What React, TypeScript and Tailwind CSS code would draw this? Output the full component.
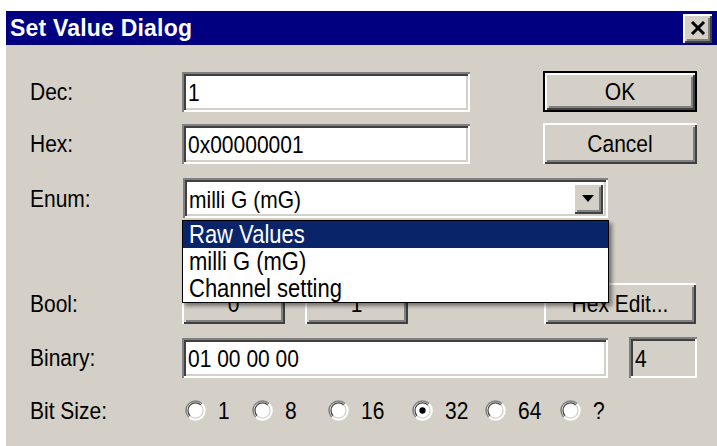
import React, { useState } from "react";

const sunken =
  "shadow-[inset_2px_2px_0_#808080,inset_-2px_-2px_0_#ffffff,inset_4px_4px_0_#404040,inset_-4px_-4px_0_#d4d0c8]";
const raised =
  "shadow-[inset_2px_2px_0_#ffffff,inset_-2px_-2px_0_#404040,inset_4px_4px_0_#d4d0c8,inset_-4px_-4px_0_#808080]";

// the dialog font is drawn a bit taller than it is wide
const tall = "inline-block scale-y-[1.18]";

const Field = ({ value, width }: { value: string; width: string }) => (
  <div className={`${width} h-[40px] bg-white ${sunken} flex items-center pl-[6px] pt-[2px]`}>
    <span className={tall}>{value}</span>
  </div>
);

const Button = ({ label, width, isDefault }: { label: string; width: string; isDefault?: boolean }) => (
  <button
    type="button"
    className={`${width} h-[41px] bg-[#d4d0c8] flex items-center justify-center ${
      isDefault ? "border-2 border-black" : ""
    } ${raised}`}
  >
    <span className={tall}>{label}</span>
  </button>
);

const Radio = ({ checked }: { checked?: boolean }) => (
  <svg width="21" height="21" viewBox="0 0 20 20">
    <circle cx="10" cy="10" r="9" fill="#ffffff" />
    <path d="M3.6 16.4 A9 9 0 0 1 16.4 3.6" fill="none" stroke="#808080" strokeWidth="1.4" />
    <path d="M4.9 15.1 A7.2 7.2 0 0 1 15.1 4.9" fill="none" stroke="#404040" strokeWidth="1.2" />
    <path d="M16.4 3.6 A9 9 0 0 1 3.6 16.4" fill="none" stroke="#ffffff" strokeWidth="1.4" />
    <path d="M15.1 4.9 A7.2 7.2 0 0 1 4.9 15.1" fill="none" stroke="#d4d0c8" strokeWidth="1.2" />
    {checked && <circle cx="10" cy="10" r="3" fill="#000000" />}
  </svg>
);

const bitSizes = [
  { label: "1", width: "w-[67px]" },
  { label: "8", width: "w-[76px]" },
  { label: "16", width: "w-[84px]" },
  { label: "32", width: "w-[73px]" },
  { label: "64", width: "w-[75px]" },
  { label: "?", width: "w-[60px]" },
];

const enumOptions = ["Raw Values", "milli G (mG)", "Channel setting"];

const App = () => {
  const [bitSize] = useState("32");

  return (
    <div className="min-h-screen bg-white pt-[11px] pl-[6px] font-['Liberation_Sans',Arial,sans-serif] text-[21px] text-black leading-none">
      <div className="w-[711px] h-[435px] bg-[#d4d0c8] flex flex-col">
        {/* title bar */}
        <div className="h-[34px] bg-[#000080] flex items-center justify-between pl-[4px] pr-[5px]">
          <span className="text-white font-bold text-[23px] tracking-[0.2px]">Set Value Dialog</span>
          <div className={`w-[29px] h-[29px] bg-[#d4d0c8] flex items-center justify-center ${raised}`}>
            <svg width="16" height="14" viewBox="0 0 16 14">
              <path d="M2 1 L14 13 M14 1 L2 13" stroke="#000" strokeWidth="3" />
            </svg>
          </div>
        </div>

        <div className="flex flex-col pt-[26px] pl-[24px]">
          <div className="flex items-center h-[41px]">
            <span className={`w-[152px] ${tall}`}>Dec:</span>
            <Field value="1" width="w-[288px]" />
            <div className="ml-[73px]">
              <Button label="OK" width="w-[154px]" isDefault />
            </div>
          </div>

          <div className="flex items-center h-[41px] mt-[11px]">
            <span className={`w-[152px] ${tall}`}>Hex:</span>
            <Field value="0x00000001" width="w-[288px]" />
            <div className="ml-[73px]">
              <Button label="Cancel" width="w-[154px]" />
            </div>
          </div>

          <div className="flex items-center h-[40px] mt-[14px]">
            <span className={`w-[153px] ${tall}`}>Enum:</span>
            <div className={`relative w-[425px] h-[40px] bg-white ${sunken} flex items-center pl-[6px] pt-[2px]`}>
              <span className={tall}>milli G (mG)</span>
              <div
                className={`absolute right-[5px] top-[5px] w-[30px] h-[31px] bg-[#d4d0c8] flex items-center justify-center ${raised}`}
              >
                <svg width="12" height="7" viewBox="0 0 12 7">
                  <path d="M0 0 H12 L6 7 Z" fill="#000" />
                </svg>
              </div>
              {/* open list */}
              <div className="absolute left-[-1px] top-[42px] w-[427px] z-10 bg-white border border-black shadow-[3px_3px_4px_rgba(0,0,0,0.45)] text-[22px]">
                {enumOptions.map((opt, i) => (
                  <div
                    key={opt}
                    className={`h-[27px] flex items-center pl-[6px] ${i === 0 ? "bg-[#0a246a] text-white" : ""}`}
                  >
                    <span className={tall}>{opt}</span>
                  </div>
                ))}
              </div>
            </div>
          </div>

          <div className="flex items-center h-[41px] mt-[65px]">
            <span className={`w-[152px] ${tall}`}>Bool:</span>
            <Button label="0" width="w-[103px]" />
            <div className="ml-[20px]">
              <Button label="1" width="w-[103px]" />
            </div>
            <div className="ml-[136px]">
              <Button label="Hex Edit..." width="w-[152px]" />
            </div>
          </div>

          <div className="flex items-center h-[41px] mt-[13px]">
            <span className={`w-[152px] ${tall}`}>Binary:</span>
            <Field value="01 00 00 00" width="w-[426px]" />
            <div className={`ml-[21px] w-[68px] h-[41px] ${sunken} flex items-center pl-[6px] pt-[2px]`}>
              <span className={tall}>4</span>
            </div>
          </div>

          <div className="flex items-center h-[26px] mt-[19px]">
            <span className={`w-[155px] ${tall}`}>Bit Size:</span>
            {bitSizes.map((b) => (
              <div key={b.label} className={`${b.width} flex items-center`}>
                <Radio checked={b.label === bitSize} />
                <span className={`ml-[12px] ${tall}`}>{b.label}</span>
              </div>
            ))}
          </div>
        </div>
      </div>
    </div>
  );
};

export default App;
